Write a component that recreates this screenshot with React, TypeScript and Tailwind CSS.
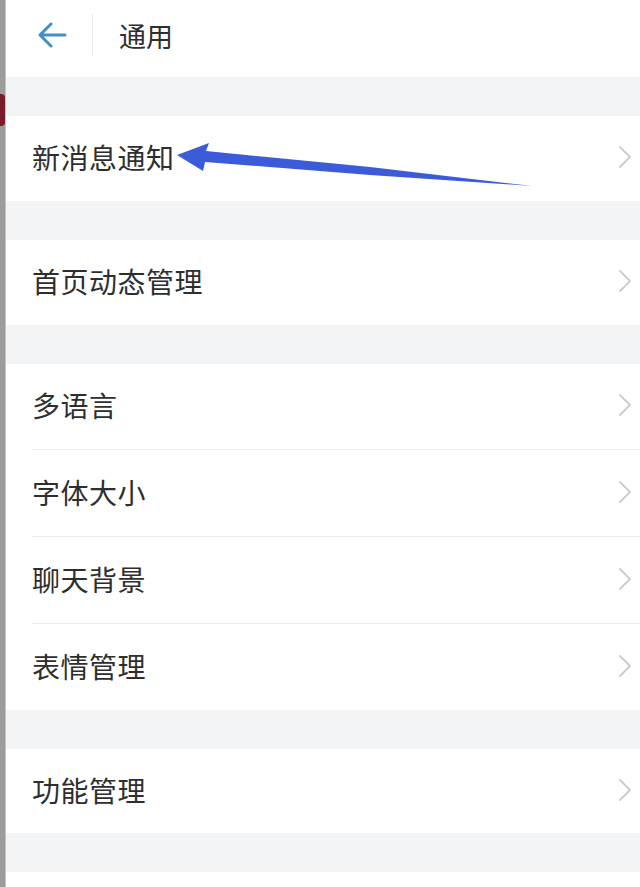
import React from "react";

const font = { fontFamily: '"Noto Sans CJK SC", "Noto Sans", sans-serif' };

function Chevron() {
  return (
    <svg width="18" height="26" viewBox="0 0 18 26" className="shrink-0">
      <path d="M4 3 L14 13 L4 23" fill="none" stroke="#cccccc" strokeWidth="1.8" strokeLinecap="round" strokeLinejoin="round" />
    </svg>
  );
}

function Row({ label, h }: { label: string; h: string }) {
  return (
    <div className={`flex items-center justify-between bg-white pb-[3px] pl-[26px] pr-[6px] ${h}`}>
      <span className="text-[28px] leading-none text-[#2e2e2e] tracking-[0.5px]">{label}</span>
      <Chevron />
    </div>
  );
}

function Sep() {
  return (
    <div className="bg-white pl-[26px]">
      <div className="h-px bg-[#ececec]" />
    </div>
  );
}

function Gap() {
  return <div className="h-[39px] bg-[#f3f4f6]" />;
}

export default function App() {
  return (
    <div className="relative flex h-[887px] w-[640px] overflow-hidden bg-white" style={font}>
      <div className="flex w-[6px] shrink-0 bg-[#a3a3a3]">
        <div className="w-[5px] bg-[#9c9c9c]" />
        <div className="w-px bg-[#c4c4c4]" />
      </div>
      <div className="absolute left-0 top-[94px] h-[32px] w-[5px] rounded-r bg-[#7a1c2c]" />
      <div className="flex flex-1 flex-col">
        <div className="flex h-[77px] items-center bg-white pb-[7px]">
          <div className="flex w-[62px] justify-end">
            <svg width="32" height="30" viewBox="0 0 32 30">
              <path d="M29 15 H5 M15 4 L4 15 L15 26" fill="none" stroke="#3f92c8" strokeWidth="3" strokeLinecap="round" strokeLinejoin="round" />
            </svg>
          </div>
          <div className="ml-[24px] h-[42px] w-px bg-[#e6e6e6]" />
          <span className="ml-[26px] text-[27px] leading-none text-[#2e2e2e]">通用</span>
        </div>
        <Gap />
        <Row label="新消息通知" h="h-[85px]" />
        <Gap />
        <Row label="首页动态管理" h="h-[85px]" />
        <Gap />
        <Row label="多语言" h="h-[85px]" />
        <Sep />
        <Row label="字体大小" h="h-[86px]" />
        <Sep />
        <Row label="聊天背景" h="h-[86px]" />
        <Sep />
        <Row label="表情管理" h="h-[86px]" />
        <Gap />
        <Row label="功能管理" h="h-[84px]" />
        <Gap />
        <div className="flex-1 bg-white" />
      </div>
      <svg className="pointer-events-none absolute left-0 top-0" width="640" height="887" viewBox="0 0 640 887">
        <polygon
          points="177,155 209,143 206,151 370,167 532,186 370,175 205,162 203,171"
          fill="#3b5bd8"
        />
      </svg>
    </div>
  );
}
